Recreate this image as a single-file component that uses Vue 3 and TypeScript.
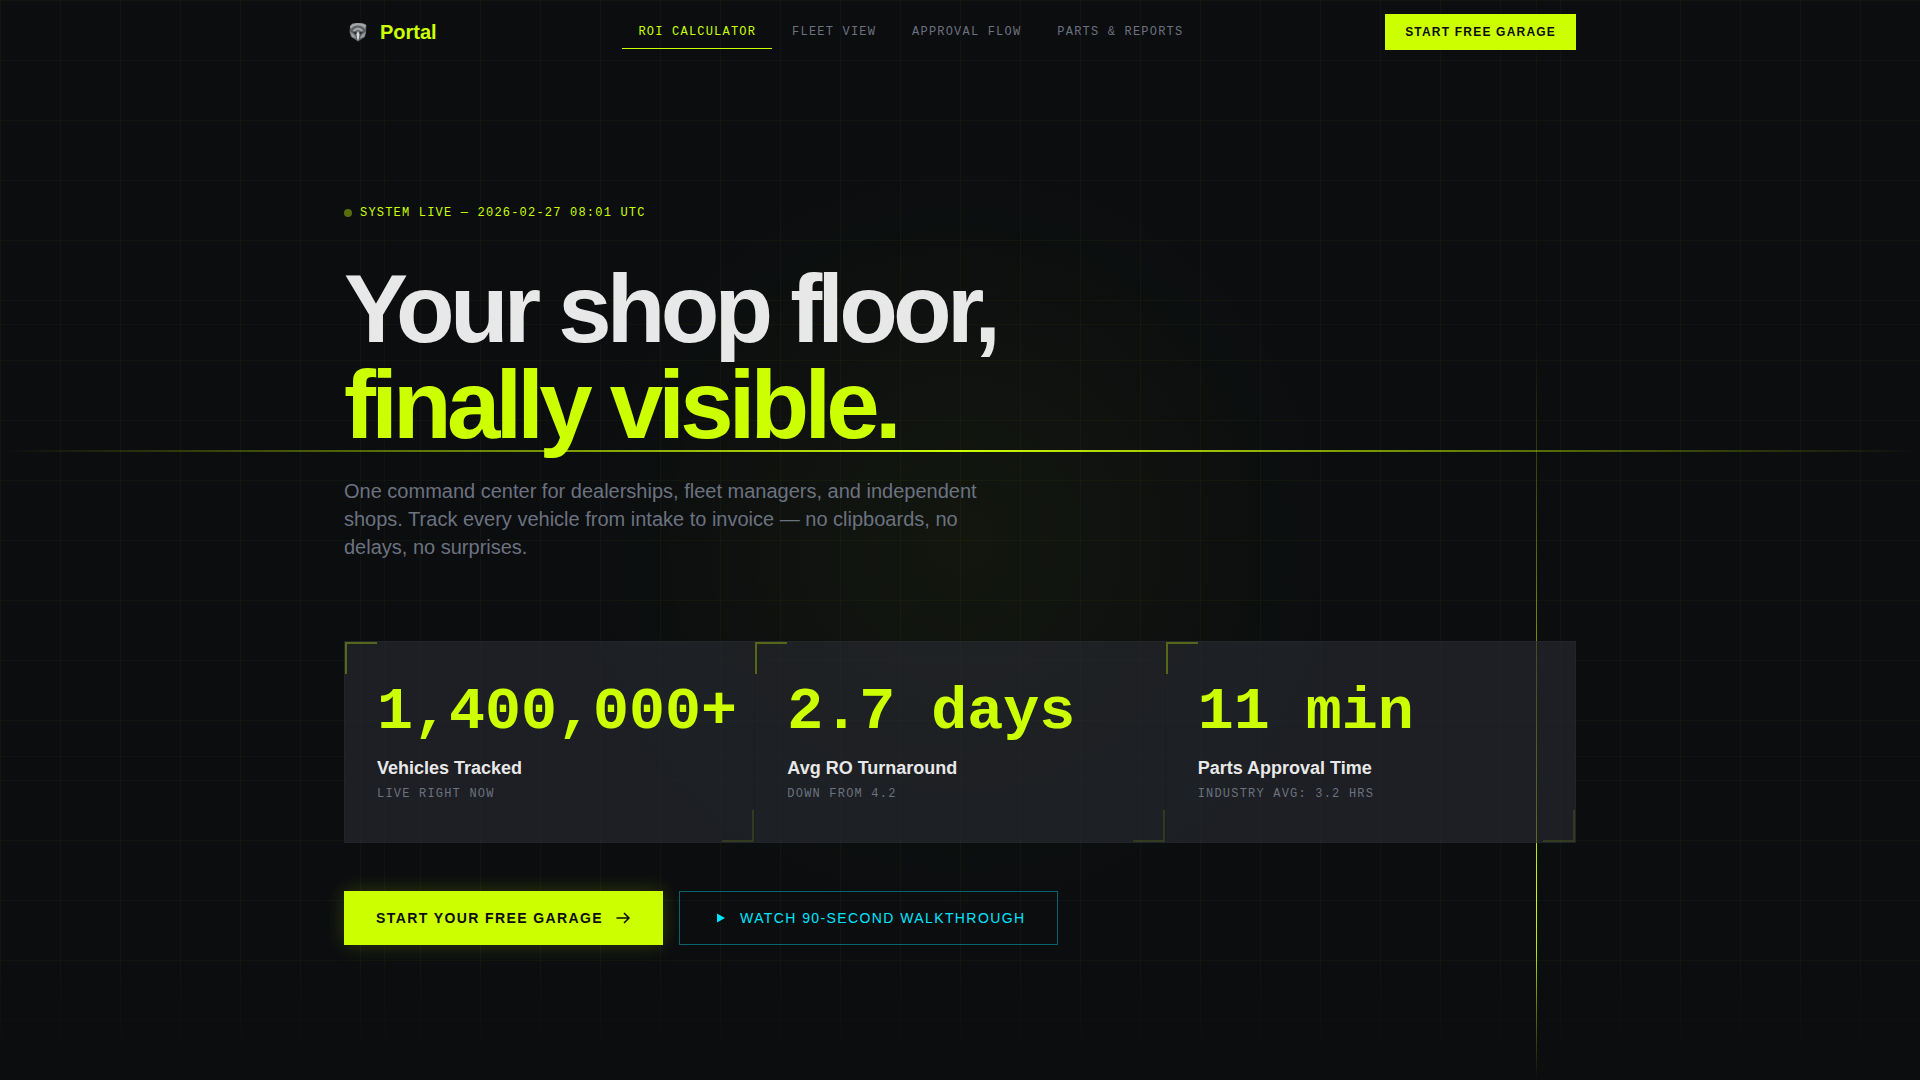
<script setup lang="ts">
interface NavItem {
  label: string
  href: string
  active?: boolean
}

interface Stat {
  value: string
  label: string
  note: string
}

const navItems: NavItem[] = [
  { label: 'ROI CALCULATOR', href: '#roi', active: true },
  { label: 'FLEET VIEW', href: '#fleet' },
  { label: 'APPROVAL FLOW', href: '#approval' },
  { label: 'PARTS & REPORTS', href: '#parts' },
]

const stats: Stat[] = [
  { value: '1,400,000+', label: 'Vehicles Tracked', note: 'LIVE RIGHT NOW' },
  { value: '2.7 days', label: 'Avg RO Turnaround', note: 'DOWN FROM 4.2' },
  { value: '11 min', label: 'Parts Approval Time', note: 'INDUSTRY AVG: 3.2 HRS' },
]
</script>

<template>
  <div class="page">
    <div class="backdrop" aria-hidden="true">
      <div class="grid"></div>
      <div class="glow"></div>
      <div class="guide guide-h guide-top"></div>
      <div class="guide guide-h guide-bottom"></div>
      <div class="guide guide-v guide-left"></div>
      <div class="guide guide-v guide-right"></div>
      <div class="beam-h"></div>
      <div class="beam-v"></div>
      <div class="fade"></div>
    </div>

    <header class="header container">
      <a class="brand" href="#top">
        <svg class="brand-mark" viewBox="0 0 28 28" aria-hidden="true">
          <path d="M6 8 L8 5.500 L14 5 L20 5.500 L22.500 7 L22 15 L21 19 L14 23.500 L7 19 L5.500 14 Z" fill="#5c5f61" />
          <path d="M6 8.500 Q8 5 14 5 Q19 5 22 7 L21 11 Q19 7.500 14 7.500 Q9 7.500 7 11 Z" fill="#a4a7a9" />
          <path d="M8.500 12.500 Q14 6.500 19.500 12.500 L17.500 13.500 Q14 10.500 10.500 13.500 Z" fill="#9fa2a4" />
          <path d="M6 13.500 L10 16.500 L12.500 20.500 L8 19 Z M22 13.500 L18 16.500 L15.500 20.500 L20 19 Z" fill="#999c9e" />
          <path d="M14 13 L15.500 16 L15 20 L14 23 L13 20 L12.500 16 Z" fill="#d4d6d7" />
          <path d="M9 14 L12.500 14.500 L12 16.500 Z M19 14 L15.500 14.500 L16 16.500 Z" fill="#202324" />
        </svg>
        <span>Portal</span>
      </a>
      <nav class="nav" aria-label="Main">
        <a
          v-for="item in navItems"
          :key="item.label"
          :href="item.href"
          class="nav-link"
          :class="{ active: item.active }"
        >{{ item.label }}</a>
      </nav>
      <button class="header-cta" type="button">START FREE GARAGE</button>
    </header>

    <main class="hero container">
      <p class="status"><span class="dot"></span>SYSTEM LIVE — 2026-02-27 08:01 UTC</p>
      <h1 class="title">Your shop floor,<br /><span class="accent">finally visible.</span></h1>
      <p class="lead">
        One command center for dealerships, fleet managers, and independent shops. Track every
        vehicle from intake to invoice — no clipboards, no delays, no surprises.
      </p>

      <section class="stats" aria-label="Live statistics">
        <article v-for="stat in stats" :key="stat.label" class="stat">
          <div class="stat-value">{{ stat.value }}</div>
          <div class="stat-label">{{ stat.label }}</div>
          <div class="stat-note">{{ stat.note }}</div>
        </article>
      </section>

      <div class="actions">
        <button class="btn primary" type="button">
          START YOUR FREE GARAGE
          <svg viewBox="0 0 16 16" aria-hidden="true">
            <path d="M1.500 8 H14 M9 3 L14 8 L9 13" fill="none" stroke="currentColor" stroke-width="1.500" />
          </svg>
        </button>
        <button class="btn secondary" type="button">
          <svg viewBox="0 0 16 16" aria-hidden="true">
            <path d="M5 3.500 L13 8 L5 12.500 Z" fill="currentColor" />
          </svg>
          WATCH 90-SECOND WALKTHROUGH
        </button>
      </div>
    </main>
  </div>
</template>

<style>
body {
  margin: 0;
  background: #0b0d0f;
}
</style>

<style scoped>
.page {
  --lime: #ccff00;
  --cyan: #00e5ff;
  --muted: #6b7280;
  --mono: "Liberation Mono", monospace;
  position: relative;
  min-height: 100vh;
  box-sizing: border-box;
  overflow: hidden;
  color: #e8e8e8;
  font-family: "Liberation Sans", Arial, sans-serif;
}

.backdrop,
.backdrop > div {
  position: absolute;
  pointer-events: none;
}

.backdrop,
.backdrop > .grid {
  inset: 0;
}

.grid {
  background-image:
    linear-gradient(rgba(204, 255, 0, 0.03) 1px, transparent 1px),
    linear-gradient(90deg, rgba(204, 255, 0, 0.03) 1px, transparent 1px);
  background-size: 60px 60px;
}

.glow {
  top: 50%;
  left: 50%;
  width: 800px;
  height: 800px;
  transform: translate(-50%, -50%);
  background: radial-gradient(circle, rgba(204, 255, 0, 0.04), transparent 70%);
}

.guide {
  background: rgba(204, 255, 0, 0.03);
}

.guide-h {
  left: 0;
  right: 0;
  height: 1px;
}

.guide-v {
  top: 0;
  bottom: 0;
  width: 1px;
}

.guide-top {
  top: 30%;
}

.guide-bottom {
  top: 70%;
}

.guide-left {
  left: 20%;
}

.guide-right {
  left: 80%;
}

.beam-h {
  top: 450px;
  left: 0;
  right: 0;
  height: 2px;
  background: linear-gradient(90deg, transparent, var(--lime), transparent);
}

.beam-v {
  top: 33%;
  left: 80%;
  width: 1px;
  height: 100%;
  background: linear-gradient(transparent, var(--lime), transparent);
}

.fade {
  left: 0;
  right: 0;
  bottom: 0;
  height: 128px;
  background: linear-gradient(transparent, #0b0d0f);
}

.container {
  position: relative;
  box-sizing: border-box;
  width: 100%;
  max-width: 1280px;
  margin: 0 auto;
  padding: 0 24px;
}

.header {
  display: flex;
  align-items: center;
  justify-content: space-between;
  height: 64px;
}

.brand {
  display: flex;
  align-items: center;
  gap: 8px;
  color: var(--lime);
  font-size: 20px;
  font-weight: 700;
  line-height: 28px;
  text-decoration: none;
}

.brand-mark {
  width: 28px;
  height: 28px;
}

.nav {
  display: flex;
  gap: 4px;
}

.nav-link {
  padding: 8px 16px;
  border-bottom: 1px solid transparent;
  color: var(--muted);
  font: 12px/16px var(--mono);
  letter-spacing: 0.1em;
  text-decoration: none;
}

.nav-link.active {
  border-color: var(--lime);
  color: var(--lime);
}

button {
  border: 0;
  border-radius: 0;
  font-family: inherit;
  cursor: pointer;
}

.header-cta {
  padding: 10px 20px;
  background: var(--lime);
  color: #0b0d0f;
  font-size: 12px;
  font-weight: 700;
  line-height: 16px;
  letter-spacing: 0.1em;
}

.hero {
  padding-top: 141px;
  padding-bottom: 80px;
}

.status {
  display: flex;
  align-items: center;
  gap: 8px;
  margin: 0 0 40px;
  color: var(--lime);
  font: 12px/16px var(--mono);
  letter-spacing: 0.1em;
}

.dot {
  width: 8px;
  height: 8px;
  border-radius: 50%;
  background: var(--lime);
  opacity: 0.4;
}

.title {
  margin: 0 0 24px;
  font-size: 96px;
  font-weight: 700;
  line-height: 96px;
  letter-spacing: -0.05em;
}

.accent {
  color: var(--lime);
}

.lead {
  max-width: 672px;
  margin: 0 0 80px;
  color: var(--muted);
  font-size: 20px;
  line-height: 28px;
}

.stats {
  display: grid;
  grid-template-columns: repeat(3, minmax(0, 1fr));
  gap: 1px;
  margin-bottom: 48px;
  border: 1px solid rgba(42, 43, 49, 0.5);
  background: rgba(42, 43, 49, 0.5);
}

.stat {
  position: relative;
  padding: 40px 32px;
  background: rgba(38, 40, 48, 0.3);
}

.stat::before,
.stat::after {
  content: "";
  position: absolute;
  box-sizing: border-box;
  width: 32px;
  height: 32px;
}

.stat::before {
  top: 0;
  left: 0;
  border-top: 2px solid rgba(204, 255, 0, 0.32);
  border-left: 2px solid rgba(204, 255, 0, 0.32);
}

.stat::after {
  right: 0;
  bottom: 0;
  border-right: 2px solid rgba(204, 255, 0, 0.12);
  border-bottom: 2px solid rgba(204, 255, 0, 0.12);
}

.stat-value {
  margin-bottom: 12px;
  color: var(--lime);
  font: 700 60px/60px var(--mono);
  white-space: nowrap;
}

.stat-label {
  margin-bottom: 4px;
  font-size: 18px;
  font-weight: 700;
  line-height: 28px;
}

.stat-note {
  color: var(--muted);
  font: 12px/16px var(--mono);
  letter-spacing: 0.1em;
}

.actions {
  display: flex;
  flex-wrap: wrap;
  gap: 16px;
}

.btn {
  display: flex;
  align-items: center;
  gap: 12px;
  font-size: 14px;
  line-height: 20px;
  letter-spacing: 0.1em;
}

.btn svg {
  width: 16px;
  height: 16px;
}

.primary {
  padding: 17px 32px;
  background: var(--lime);
  box-shadow: 0 0 20px rgba(204, 255, 0, 0.2);
  color: #0b0d0f;
  font-weight: 700;
}

.secondary {
  padding: 16px 32px;
  border: 1px solid rgba(0, 229, 255, 0.4);
  background: transparent;
  color: var(--cyan);
}
</style>
